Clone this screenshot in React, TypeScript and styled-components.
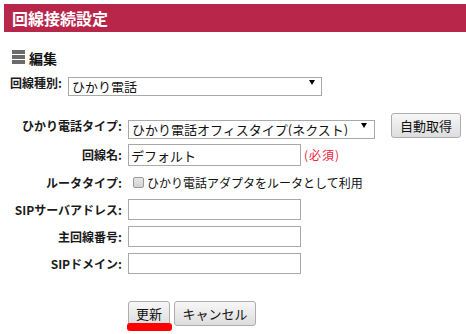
import React from "react";
import styled, {createGlobalStyle} from "styled-components";

const GlobalStyle = createGlobalStyle`
    html, body {
        margin: 0;
        padding: 0;
        background: #fff;
    }
    body {
        font-family: "Noto Sans CJK JP", "Noto Sans", sans-serif;
        color: #222;
    }
`;

const Page = styled.div`
    padding: 4px 0 12px 4px;
`;

const Header = styled.h1`
    margin: 0;
    height: 28px;
    display: flex;
    align-items: center;
    padding-left: 8px;
    background: #b8264a;
    color: #fff;
    font-size: 16px;
    font-weight: bold;
    line-height: 1;
`;

const Content = styled.div`
    padding-left: 6px;
`;

const SectionTitle = styled.h2`
    margin: 18px 0 0 2px;
    height: 15px;
    display: flex;
    align-items: center;
    gap: 4px;
    font-size: 14px;
    font-weight: bold;
    color: #111;
    line-height: 1;
`;

const TopRow = styled.div`
    margin-top: 8px;
    height: 19px;
    display: flex;
    align-items: center;
    gap: 6px;
`;

const Label = styled.label`
    font-size: 12px;
    font-weight: bold;
    color: #1a1a1a;
    white-space: nowrap;
    line-height: 1;
`;

const FormGrid = styled.div`
    margin-top: 21px;
    display: grid;
    grid-template-columns: 112px 1fr;
    grid-template-rows: 25px 22px 21px 21px 21px 21px;
    column-gap: 6px;
    row-gap: 6px;
    align-items: center;

    ${Label} {
        justify-self: end;
    }
`;

const Field = styled.div<{ $gap?: number }>`
    display: flex;
    align-items: center;
    gap: ${p => p.$gap ?? 0}px;
`;

const SelectWrap = styled.div<{ $w: number; $arrowRight: number }>`
    position: relative;
    width: ${p => p.$w}px;
    height: 19px;

    &::after {
        content: "";
        position: absolute;
        right: ${p => p.$arrowRight}px;
        top: 7px;
        border-left: 3px solid transparent;
        border-right: 3px solid transparent;
        border-top: 5px solid #000;
        pointer-events: none;
    }
`;

const Select = styled.select`
    appearance: none;
    width: 100%;
    height: 100%;
    box-sizing: border-box;
    margin: 0;
    padding: 0 16px 0 3px;
    border: 1px solid #a9a9a9;
    border-radius: 0;
    background: #fff;
    color: #111;
    font-family: inherit;
    font-size: 13px;
    line-height: 1;
    outline: none;
`;

const TextInput = styled.input<{ $h?: number }>`
    width: 173px;
    height: ${p => p.$h ?? 21}px;
    box-sizing: border-box;
    margin: 0;
    padding: 0 2px;
    border: 1px solid #a9a9a9;
    background: #fff;
    color: #111;
    font-family: inherit;
    font-size: 13px;
    outline: none;
`;

const Required = styled.span`
    color: #f22040;
    font-size: 12px;
    line-height: 1;
    letter-spacing: 1px;
`;

const Checkbox = styled.input`
    appearance: none;
    margin: 0 0 0 5px;
    width: 11px;
    height: 11px;
    box-sizing: border-box;
    border: 1px solid #9a9a9a;
    border-radius: 2px;
    background: linear-gradient(#e6e6e6, #d2d2d2);
`;

const CheckText = styled.span`
    font-size: 12px;
    color: #111;
    line-height: 1;
`;

const Button = styled.button<{ $w: number }>`
    width: ${p => p.$w}px;
    height: 25px;
    box-sizing: border-box;
    margin: 0;
    padding: 0;
    border: 1px solid #adadad;
    border-radius: 3px;
    background: linear-gradient(#f7f7f7, #dddddd);
    color: #111;
    font-family: inherit;
    font-size: 13px;
    line-height: 1;
`;

const Actions = styled.div`
    margin-top: 27px;
    padding-left: 118px;
    display: flex;
    align-items: flex-start;
    gap: 4px;
`;

// red marker drawn over the bottom of the update button
const Marked = styled.span`
    position: relative;
    display: inline-flex;

    &::after {
        content: "";
        position: absolute;
        z-index: 1;
        left: -1px;
        right: -2px;
        top: 22px;
        height: 8px;
        border-radius: 3px;
        background: #ff0000;
    }
`;

const ListIcon = () => (
    <svg width="13" height="15" viewBox="0 0 13 15">
        <rect x="0" y="0" width="13" height="4" fill="#6b6b6b" />
        <rect x="0" y="5" width="13" height="4" fill="#6b6b6b" />
        <rect x="0" y="10" width="13" height="4" fill="#6b6b6b" />
    </svg>
);

export default function App() {
    return (
        <Page>
            <GlobalStyle />
            <Header>回線接続設定</Header>
            <Content>
                <SectionTitle>
                    <ListIcon />
                    編集
                </SectionTitle>
                <TopRow>
                    <Label>回線種別:</Label>
                    <SelectWrap $w={254} $arrowRight={7}>
                        <Select defaultValue="hikari">
                            <option value="hikari">ひかり電話</option>
                        </Select>
                    </SelectWrap>
                </TopRow>

                <FormGrid>
                    <Label>ひかり電話タイプ:</Label>
                    <Field $gap={16}>
                        <SelectWrap $w={247} $arrowRight={8}>
                            <Select defaultValue="office">
                                <option value="office">ひかり電話オフィスタイプ(ネクスト)</option>
                            </Select>
                        </SelectWrap>
                        <Button $w={70}>自動取得</Button>
                    </Field>

                    <Label>回線名:</Label>
                    <Field $gap={3}>
                        <TextInput $h={22} defaultValue="デフォルト" />
                        <Required>(必須)</Required>
                    </Field>

                    <Label>ルータタイプ:</Label>
                    <Field $gap={3}>
                        <Checkbox type="checkbox" />
                        <CheckText>ひかり電話アダプタをルータとして利用</CheckText>
                    </Field>

                    <Label>SIPサーバアドレス:</Label>
                    <Field>
                        <TextInput />
                    </Field>

                    <Label>主回線番号:</Label>
                    <Field>
                        <TextInput />
                    </Field>

                    <Label>SIPドメイン:</Label>
                    <Field>
                        <TextInput />
                    </Field>
                </FormGrid>

                <Actions>
                    <Marked>
                        <Button $w={42}>更新</Button>
                    </Marked>
                    <Button $w={82}>キャンセル</Button>
                </Actions>
            </Content>
        </Page>
    );
}
